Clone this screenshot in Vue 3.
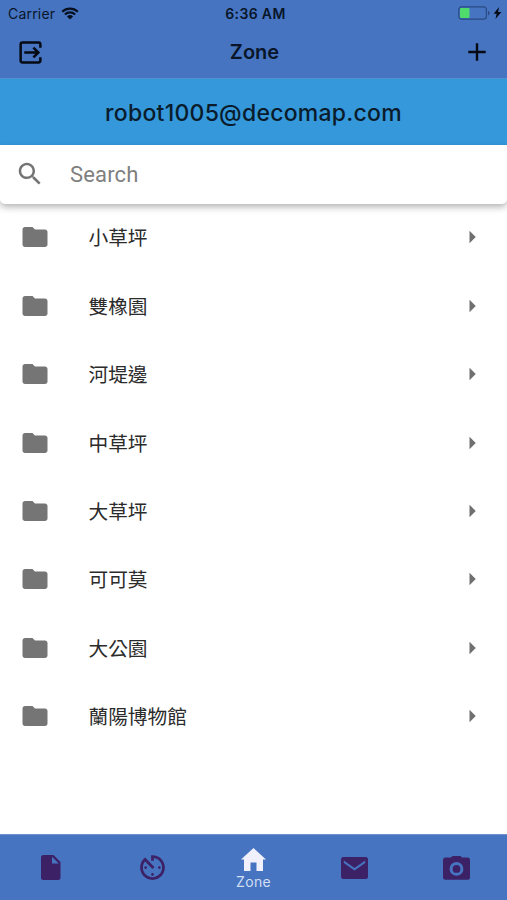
<template>
  <div class="zone-page">
    <!-- Status bar -->
    <div class="status-bar">
      <div class="carrier">
        <span class="carrier-name">Carrier</span>
        <svg class="wifi" viewBox="0 0 18 13" aria-hidden="true">
          <path d="M1.2 4.7a11.2 11.2 0 0 1 15.6 0" />
          <path d="M3.9 7.5a7.3 7.3 0 0 1 10.2 0" />
          <path class="dot" d="M9 12.6 5.9 9.5a4.6 4.6 0 0 1 6.2 0z" />
        </svg>
      </div>
      <span class="time">6:36 AM</span>
      <div class="power">
        <svg class="battery" viewBox="0 0 32 14" aria-hidden="true">
          <rect class="shell" x="0.8" y="0.8" width="27.6" height="12.4" rx="3" />
          <rect class="charge" x="2" y="2" width="9.5" height="10" rx="1" />
          <path class="tip" d="M30 4.7c2 .8 2 3.8 0 4.6z" />
        </svg>
        <svg class="bolt" viewBox="0 0 8 12" aria-hidden="true">
          <path d="M5.6 0 .1 6.700h3L2 12 7.900 5H4.600z" />
        </svg>
      </div>
    </div>

    <!-- Header -->
    <header class="header">
      <button class="icon-btn" aria-label="Logout">
        <svg class="exit-icon" viewBox="0 0 24 24">
          <path d="M22.3 7V3.6q0-2-2-2H3.7q-2 0-2 2v16.8q0 2 2 2h16.6q2 0 2-2V17" />
          <path d="M5.5 12H20M15 6.9l5.2 5.1-5.2 5.1" />
        </svg>
      </button>
      <h1 class="title">Zone</h1>
      <button class="icon-btn" aria-label="Add">
        <svg class="plus-icon" viewBox="0 0 18 18">
          <path d="M9 .3v17.4M.3 9h17.4" />
        </svg>
      </button>
    </header>

    <div class="account">{{ account }}</div>

    <!-- Search -->
    <label class="search">
      <svg class="search-icon" viewBox="0 0 24 24">
        <path d="M15.5 14h-.79l-.28-.27C15.41 12.59 16 11.11 16 9.5 16 5.91 13.09 3 9.5 3S3 5.91 3 9.5 5.91 16 9.5 16c1.61 0 3.09-.59 4.23-1.57l.27.28v.79l5 4.99L20.49 19l-4.99-5zm-6 0C7.01 14 5 11.99 5 9.5S7.01 5 9.5 5 14 7.01 14 9.5 11.99 14 9.5 14z" />
      </svg>
      <input v-model="keyword" class="search-input" type="text" placeholder="Search" />
    </label>

    <!-- Zone list -->
    <ul class="zone-list">
      <li v-for="zone in filteredZones" :key="zone" class="zone-item">
        <svg class="folder-icon" viewBox="0 0 24 24">
          <path d="M10 4H4c-1.1 0-1.99.9-1.99 2L2 18c0 1.1.9 2 2 2h16c1.1 0 2-.9 2-2V8c0-1.1-.9-2-2-2h-8l-2-2z" />
        </svg>
        <span class="zone-name">{{ zone }}</span>
        <svg class="arrow-icon" viewBox="0 0 24 24">
          <path d="M10 17l5-5-5-5z" />
        </svg>
      </li>
    </ul>

    <!-- Bottom tabs -->
    <nav class="tabs">
      <button
        v-for="tab in tabs"
        :key="tab.name"
        :class="['tab', { active: tab.name === current }]"
        :aria-label="tab.name"
        @click="current = tab.name"
      >
        <svg :class="['tab-icon', tab.icon]" :viewBox="tab.box">
          <path :d="tab.path" fill-rule="evenodd" />
        </svg>
        <span v-if="tab.name === current" class="tab-label">{{ tab.name }}</span>
      </button>
    </nav>
  </div>
</template>

<script setup>
import { ref, computed } from 'vue'

const account = ref('robot1005@decomap.com')
const keyword = ref('')
const current = ref('Zone')

const zones = ref([
  '小草坪',
  '雙橡園',
  '河堤邊',
  '中草坪',
  '大草坪',
  '可可莫',
  '大公園',
  '蘭陽博物館'
])

const filteredZones = computed(() => {
  return zones.value.filter((zone) => zone.includes(keyword.value.trim()))
})

const tabs = [
  {
    name: 'File',
    icon: 'file',
    box: '0 0 20 25',
    path: 'M2.5 0H12.5L19.5 7V22.5Q19.5 25 17 25H2.5Q0 25 0 22.5V2.5Q0 0 2.5 0zM11 1.8V8.6H17.8z'
  },
  {
    name: 'Timer',
    icon: 'timer',
    box: '0 0 24 24',
    path: 'M11 17c0 .55.45 1 1 1s1-.45 1-1-.45-1-1-1-1 .45-1 1zm0-14v4h2V5.08c3.39.49 6 3.39 6 6.92 0 3.87-3.13 7-7 7s-7-3.13-7-7c0-1.68.59-3.22 1.58-4.42L12 13l1.41-1.41-6.8-6.8v.02C4.42 6.45 3 9.05 3 12c0 4.97 4.02 9 9 9 4.97 0 9-4.03 9-9s-4.03-9-9-9h-1zm7 9c0-.55-.45-1-1-1s-1 .45-1 1 .45 1 1 1 1-.45 1-1zM6 12c0 .55.45 1 1 1s1-.45 1-1-.45-1-1-1-1 .45-1 1z'
  },
  {
    name: 'Zone',
    icon: 'home',
    box: '0 0 25 23',
    path: 'M12.500 0L25 11.500H22V23H15.500V14.500H9.500V23H3V11.500H0z'
  },
  {
    name: 'Mail',
    icon: 'mail',
    box: '0 0 27 22',
    path: 'M2.5 0h22Q27 0 27 2.5v17Q27 22 24.5 22h-22Q0 22 0 19.5v-17Q0 0 2.5 0zM2.8 3.6v2.5L13.5 13.5 24.2 6.1V3.6L13.5 10.9z'
  },
  {
    name: 'Camera',
    icon: 'camera',
    box: '0 0 27 24',
    path: 'M9.500 0h8l1.500 1.500h5.500Q27 1.500 27 4v17.300q0 2.500-2.500 2.500h-22Q0 23.800 0 21.300V4Q0 1.500 2.500 1.500h5.500zM13.500 6a6.900 6.900 0 1 0 0 13.800 6.900 6.900 0 1 0 0-13.800zM13.500 9a3.900 3.900 0 1 1 0 7.800 3.900 3.900 0 1 1 0-7.800z'
  }
]
</script>

<style>
body {
  margin: 0;
}
</style>

<style scoped>
.zone-page {
  display: flex;
  flex-direction: column;
  height: 100vh;
  overflow: hidden;
  background: #fff;
  font-family: Inter, "Noto Sans CJK TC", sans-serif;
  color: #09162a;
}

button {
  padding: 0;
  border: none;
  background: none;
  cursor: pointer;
}

svg {
  display: block;
  flex-shrink: 0;
}

/* Status bar */
.status-bar {
  display: grid;
  grid-template-columns: 1fr auto 1fr;
  align-items: center;
  height: 26px;
  padding: 0 5px 0 8px;
  box-sizing: border-box;
  background: #4674c1;
}

.carrier {
  display: flex;
  align-items: center;
  gap: 6px;
}

.carrier-name {
  font-size: 14px;
  letter-spacing: 0.2px;
}

.wifi {
  width: 18px;
  height: 13px;
  fill: none;
  stroke: #071020;
  stroke-width: 2.2;
}

.wifi .dot {
  fill: #071020;
  stroke: none;
}

.time {
  padding-left: 1px;
  font-size: 14px;
  font-weight: 600;
  letter-spacing: 0.35px;
}

.power {
  display: flex;
  align-items: center;
  justify-content: flex-end;
  gap: 3px;
}

.battery {
  width: 32px;
  height: 14px;
}

.shell {
  fill: none;
  stroke: #294a82;
  stroke-width: 1.2;
}

.charge {
  fill: #4fdc6c;
}

.tip {
  fill: #294a82;
}

.bolt {
  width: 9px;
  height: 12px;
  fill: #050b16;
}

/* Header */
.header {
  display: flex;
  align-items: center;
  justify-content: space-between;
  height: 52px;
  padding: 0 21px 0 19px;
  background: #4674c1;
}

.icon-btn svg {
  fill: none;
  stroke: #050a14;
}

.exit-icon {
  width: 23px;
  height: 23px;
  stroke-width: 2.6;
}

.plus-icon {
  width: 18px;
  height: 18px;
  stroke-width: 2.4;
}

.title {
  margin: 0;
  padding-right: 1px;
  font-size: 20px;
  font-weight: 600;
}

.account {
  display: flex;
  align-items: center;
  justify-content: center;
  height: 67px;
  box-sizing: border-box;
  padding-top: 2px;
  border-top: 1px solid #5191cd;
  background: #3498db;
  font-size: 23px;
  font-weight: 500;
  letter-spacing: 0.25px;
  color: #0a1c2c;
}

/* Search */
.search {
  display: flex;
  align-items: center;
  height: 58.6px;
  padding-left: 15px;
  border-radius: 0 0 5px 5px;
  background: #fff;
  box-shadow: 0 3px 7px rgba(0, 0, 0, 0.3);
}

.search-icon {
  width: 30px;
  height: 30px;
  fill: #747474;
}

.search-input {
  flex: 1;
  min-width: 0;
  margin-left: 25px;
  padding: 0;
  border: none;
  outline: none;
  background: transparent;
  font-family: Roboto, "Noto Sans CJK TC", sans-serif;
  font-size: 22px;
  letter-spacing: 0.15px;
  color: #333;
}

.search-input::placeholder {
  color: #808080;
  opacity: 1;
}

/* Zone list */
.zone-list {
  flex: 1;
  margin: 0;
  padding: 0;
  list-style: none;
}

.zone-item {
  display: flex;
  align-items: center;
  height: 68.4px;
  padding: 0 20.5px 0 19.5px;
}

.zone-item:first-child {
  margin-top: -0.4px;
}

.folder-icon {
  width: 30px;
  height: 30px;
  fill: #757575;
}

.zone-name {
  flex: 1;
  margin-left: 39px;
  font-family: "Noto Sans CJK TC", sans-serif;
  font-size: 19.7px;
  line-height: 28px;
  color: #2b2b2b;
}

.arrow-icon {
  width: 30px;
  height: 30px;
  fill: #707070;
}

/* Bottom tabs */
.tabs {
  display: flex;
  height: 66px;
  box-sizing: border-box;
  border-top: 1px solid #6e93cd;
  background: #4674c1;
}

.tab {
  flex: 1;
  display: flex;
  flex-direction: column;
  align-items: center;
  justify-content: center;
  color: #3c2166;
}

.tab.active {
  padding-top: 3px;
  color: #f0f1fc;
}

.tab-icon {
  fill: currentColor;
}

.file {
  width: 20px;
  height: 25px;
}

.timer {
  width: 33px;
  height: 33px;
}

.home {
  width: 25px;
  height: 23px;
}

.mail {
  width: 27px;
  height: 22px;
}

.camera {
  width: 27px;
  height: 24px;
}

.tab-label {
  margin-top: 2px;
  font-family: Inter, sans-serif;
  font-size: 14px;
  line-height: 18px;
  letter-spacing: 0.3px;
  color: #d3dff5;
}
</style>
